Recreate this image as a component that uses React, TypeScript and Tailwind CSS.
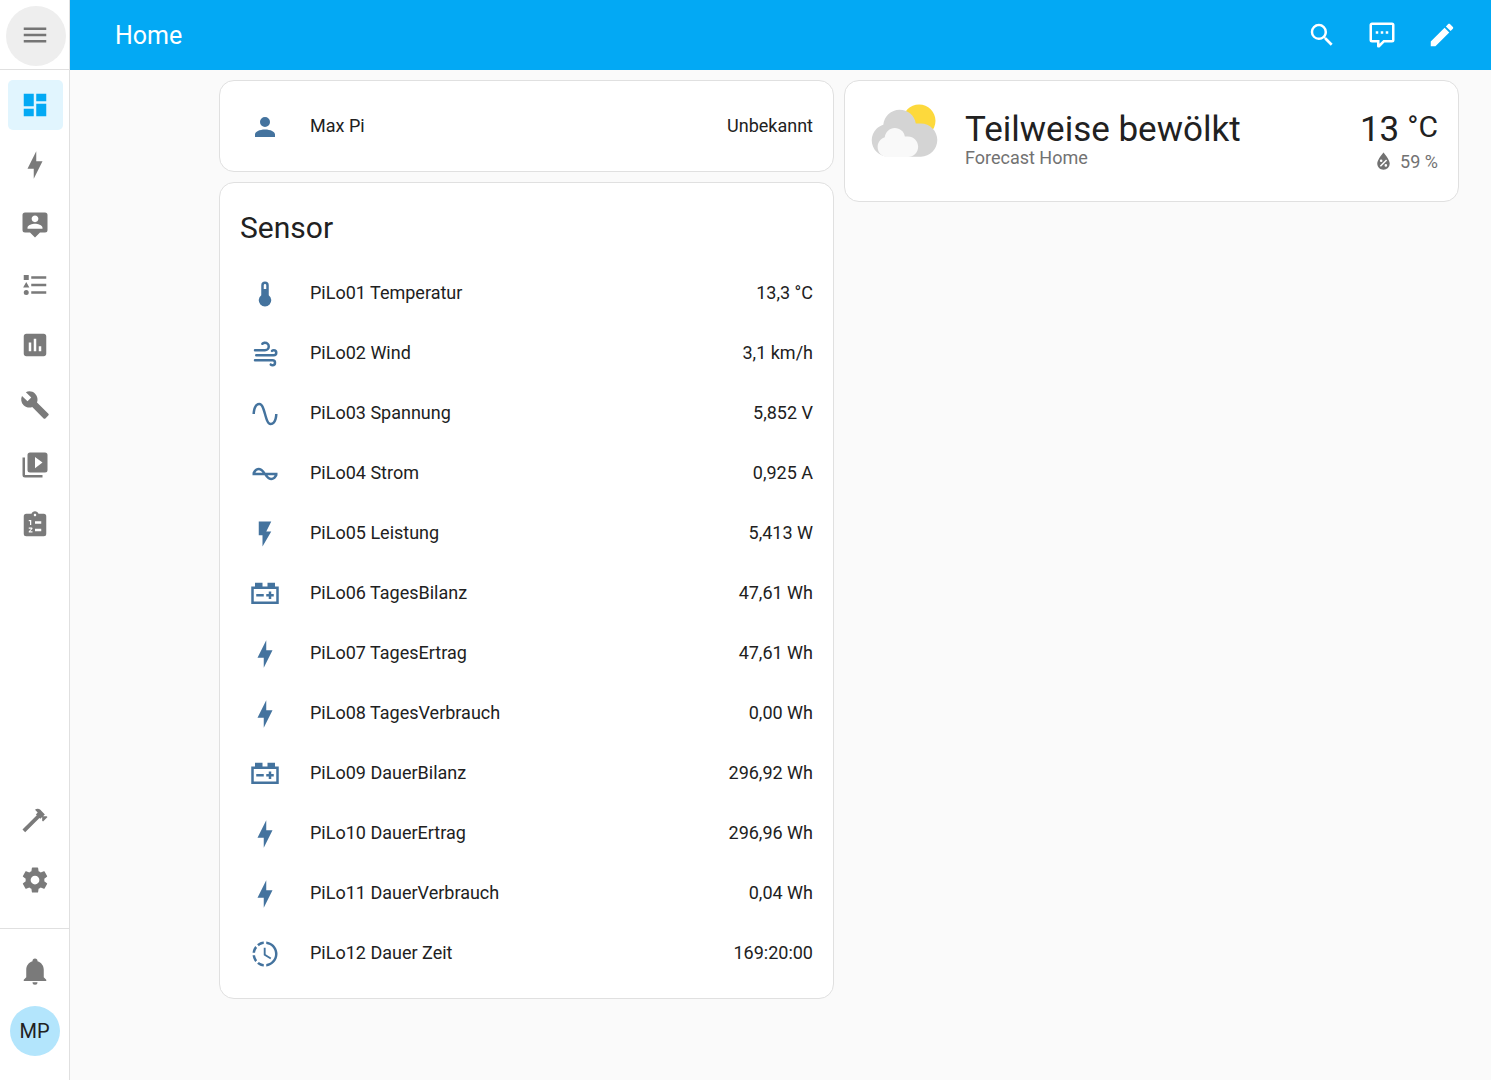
import { useState } from 'react';

// 24x24 icon paths
const ICONS = {
  menu: 'M3,6H21V8H3V6M3,11H21V13H3V11M3,16H21V18H3V16Z',
  dashboard: 'M13,3V9H21V3M13,21H21V11H13M3,21H11V15H3M3,13H11V3H3V13Z',
  bolt: 'M11 15H6L13 1V9H18L11 23V15Z',
  map: 'M20,2H4A2,2 0 0,0 2,4V16A2,2 0 0,0 4,18H8L12,22L16,18H20A2,2 0 0,0 22,16V4A2,2 0 0,0 20,2M12,4.3C13.5,4.3 14.7,5.5 14.7,7C14.7,8.5 13.5,9.7 12,9.7C10.5,9.7 9.3,8.5 9.3,7C9.3,5.5 10.5,4.3 12,4.3M18,15H6V14.1C6,12.1 10,11 12,11C14,11 18,12.1 18,14.1V15Z',
  logbook: 'M5,9.5L7.5,14H2.5L5,9.5M3,4H7V8H3V4M5,20A2,2 0 0,0 7,18A2,2 0 0,0 5,16A2,2 0 0,0 3,18A2,2 0 0,0 5,20M9,5V7H21V5H9M9,19H21V17H9V19M9,13H21V11H9V13Z',
  history: 'M9 17H7V10H9V17M13 17H11V7H13V17M17 17H15V13H17V17M19 3H5C3.9 3 3 3.9 3 5V19C3 20.1 3.9 21 5 21H19C20.1 21 21 20.1 21 19V5C21 3.9 20.1 3 19 3Z',
  wrench: 'M22.7,19L13.6,9.9C14.5,7.6 14,4.9 12.1,3C10.1,1 7.1,0.6 4.7,1.7L9,6L6,9L1.6,4.7C0.4,7.1 0.9,10.1 2.9,12.1C4.8,14 7.5,14.5 9.8,13.6L18.9,22.7C19.3,23.1 19.9,23.1 20.3,22.7L22.6,20.4C23.1,20 23.1,19.3 22.7,19Z',
  media: 'M4,6H2V20A2,2 0 0,0 4,22H18V20H4V6M20,2H8A2,2 0 0,0 6,4V16A2,2 0 0,0 8,18H20A2,2 0 0,0 22,16V4A2,2 0 0,0 20,2M12,14.5V5.5L18,10L12,14.5Z',
  todo: 'M19,3H14.82C14.4,1.84 13.3,1 12,1C10.7,1 9.6,1.84 9.18,3H5A2,2 0 0,0 3,5V19A2,2 0 0,0 5,21H19A2,2 0 0,0 21,19V5A2,2 0 0,0 19,3M7,8H9V12H8V9H7V8M10,17V18H7V17.08L9,15H7V14H9.25C9.66,14 10,14.34 10,14.75C10,14.95 9.92,15.14 9.79,15.27L8.12,17H10M11,4C11,3.45 11.45,3 12,3C12.55,3 13,3.45 13,4C13,4.55 12.55,5 12,5C11.45,5 11,4.55 11,4M17,17H12V15H17V17M17,11H12V9H17V11Z',
  hammer: 'M2,19.63L13.43,8.2L12.72,7.5L14.14,6.07L12,3.89C13.2,2.7 15.09,2.7 16.27,3.89L19.87,7.5L18.45,8.91H21.29L22,9.62L18.45,13.21L17.74,12.5V9.62L16.27,11.04L15.56,10.33L4.13,21.76L2,19.63Z',
  cog: 'M12,15.5A3.5,3.5 0 0,1 8.5,12A3.5,3.5 0 0,1 12,8.5A3.5,3.5 0 0,1 15.5,12A3.5,3.5 0 0,1 12,15.5M19.43,12.97C19.47,12.65 19.5,12.33 19.5,12C19.5,11.67 19.47,11.34 19.43,11L21.54,9.37C21.73,9.22 21.78,8.95 21.66,8.73L19.66,5.27C19.54,5.05 19.27,4.96 19.05,5.05L16.56,6.05C16.04,5.66 15.5,5.32 14.87,5.07L14.5,2.42C14.46,2.18 14.25,2 14,2H10C9.75,2 9.54,2.18 9.5,2.42L9.13,5.07C8.5,5.32 7.96,5.66 7.44,6.05L4.95,5.05C4.73,4.96 4.46,5.05 4.34,5.27L2.34,8.73C2.21,8.95 2.27,9.22 2.46,9.37L4.57,11C4.53,11.34 4.5,11.67 4.5,12C4.5,12.33 4.53,12.65 4.57,12.97L2.46,14.63C2.27,14.78 2.21,15.05 2.34,15.27L4.34,18.73C4.46,18.95 4.73,19.03 4.95,18.95L7.44,17.94C7.96,18.34 8.5,18.68 9.13,18.93L9.5,21.58C9.54,21.82 9.75,22 10,22H14C14.25,22 14.46,21.82 14.5,21.58L14.87,18.93C15.5,18.67 16.04,18.34 16.56,17.94L19.05,18.95C19.27,19.03 19.54,18.95 19.66,18.73L21.66,15.27C21.78,15.05 21.73,14.78 21.54,14.63L19.43,12.97Z',
  bell: 'M21,19V20H3V19L5,17V11C5,7.9 7.03,5.17 10,4.29C10,4.19 10,4.1 10,4A2,2 0 0,1 12,2A2,2 0 0,1 14,4C14,4.1 14,4.19 14,4.29C16.97,5.17 19,7.9 19,11V17L21,19M14,21A2,2 0 0,1 12,23A2,2 0 0,1 10,21',
  search: 'M9.5,3A6.5,6.5 0 0,1 16,9.5C16,11.11 15.41,12.59 14.44,13.73L14.71,14H15.5L20.5,19L19,20.5L14,15.5V14.71L13.73,14.44C12.59,15.41 11.11,16 9.5,16A6.5,6.5 0 0,1 3,9.5A6.5,6.5 0 0,1 9.5,3M9.5,5C7,5 5,7 5,9.5C5,12 7,14 9.5,14C12,14 14,12 14,9.5C14,7 12,5 9.5,5Z',
  message: 'M9,22A1,1 0 0,1 8,21V18H4A2,2 0 0,1 2,16V4C2,2.89 2.9,2 4,2H20A2,2 0 0,1 22,4V16A2,2 0 0,1 20,18H13.9L10.2,21.71C10,21.9 9.75,22 9.5,22V22H9M10,16V19.08L13.08,16H20V4H4V16H10M17,11H15V9H17V11M13,11H11V9H13V11M9,11H7V9H9V11Z',
  pencil: 'M20.71,7.04C21.1,6.65 21.1,6 20.71,5.63L18.37,3.29C18,2.9 17.35,2.9 16.96,3.29L15.12,5.12L18.87,8.87M3,17.25V21H6.75L17.81,9.93L14.06,6.18L3,17.25Z',
  account: 'M12,4A4,4 0 0,1 16,8A4,4 0 0,1 12,12A4,4 0 0,1 8,8A4,4 0 0,1 12,4M12,14C16.42,14 20,15.79 20,18V20H4V18C4,15.79 7.58,14 12,14Z',
  thermometer: 'M15 13V5A3 3 0 0 0 9 5V13A5 5 0 1 0 15 13M12 4A1 1 0 0 1 13 5V8H11V5A1 1 0 0 1 12 4Z',
  wind: 'M4,10A1,1 0 0,1 3,9A1,1 0 0,1 4,8H12A2,2 0 0,0 14,6A2,2 0 0,0 12,4C11.45,4 10.95,4.22 10.59,4.59C10.2,5 9.56,5 9.17,4.59C8.78,4.2 8.78,3.56 9.17,3.17C9.9,2.45 10.9,2 12,2A4,4 0 0,1 16,6A4,4 0 0,1 12,10H4M19,12A1,1 0 0,0 20,11A1,1 0 0,0 19,10C18.72,10 18.47,10.11 18.29,10.29C17.9,10.68 17.27,10.68 16.88,10.29C16.5,9.9 16.5,9.27 16.88,8.88C17.42,8.34 18.17,8 19,8A3,3 0 0,1 22,11A3,3 0 0,1 19,14H5A1,1 0 0,1 4,13A1,1 0 0,1 5,12H19M18,18H4A1,1 0 0,1 3,17A1,1 0 0,1 4,16H18A3,3 0 0,1 21,19A3,3 0 0,1 18,22C17.17,22 16.42,21.66 15.88,21.12C15.5,20.73 15.5,20.1 15.88,19.71C16.27,19.32 16.9,19.32 17.29,19.71C17.47,19.89 17.72,20 18,20A1,1 0 0,0 19,19A1,1 0 0,0 18,18Z',
  sine: 'M16.5,21C13.5,21 12.31,16.76 11.05,12.28C10.14,9.04 9,5 7.5,5C4.11,5 4,11.93 4,12H2C2,11.63 2.06,3 7.5,3C10.5,3 11.71,7.25 12.97,11.74C13.83,14.8 15,19 16.5,19C19.94,19 20.03,12.07 20.03,12H22.03C22.03,12.37 21.97,21 16.5,21Z',
  current: 'M12.43 11C12.28 10.84 10 7 7 7S2.32 10.18 2 11V13H11.57C11.72 13.16 14 17 17 17S21.68 13.82 22 13V11H12.43M7 9C8.17 9 9.18 9.85 10 11H4.31C4.78 10.17 5.54 9 7 9M17 15C15.83 15 14.82 14.15 14 13H19.69C19.22 13.83 18.46 15 17 15Z',
  flash: 'M7,2V13H10V22L17,10H13L17,2H7Z',
  battery: 'M4,3V6H1V20H23V6H20V3H14V6H10V3H4M3,8H21V18H3V8M15,10V12H13V14H15V16H17V14H19V12H17V10H15M5,12V14H11V12H5Z',
  clock: 'M13,2.03V2.05L13,4.05C17.39,4.59 20.5,8.58 19.96,12.97C19.5,16.61 16.64,19.5 13,19.93V21.93C18.5,21.38 22.5,16.5 21.95,11C21.5,6.25 17.73,2.5 13,2.03M11,2.06C9.05,2.25 7.19,3 5.67,4.26L7.1,5.74C8.22,4.84 9.57,4.26 11,4.06V2.06M4.26,5.67C3,7.19 2.25,9.04 2.05,11H4.05C4.24,9.58 4.8,8.23 5.69,7.1L4.26,5.67M2.06,13C2.26,14.96 3.03,16.81 4.27,18.33L5.69,16.9C4.81,15.77 4.24,14.42 4.06,13H2.06M7.1,18.37L5.67,19.74C7.18,21 9.04,21.79 11,22V20C9.58,19.82 8.23,19.25 7.1,18.37M12.5,7V12.25L17,14.92L16.25,16.15L11,13V7H12.5Z',
  humidity: 'M12,3.25C12,3.25 6,10 6,14C6,17.32 8.69,20 12,20A6,6 0 0,0 18,14C18,10 12,3.25 12,3.25M14.47,9.97L15.53,11.03L9.53,17.03L8.47,15.97M9.75,10A1.25,1.25 0 0,1 11,11.25A1.25,1.25 0 0,1 9.75,12.5A1.25,1.25 0 0,1 8.5,11.25A1.25,1.25 0 0,1 9.75,10M14.25,14.5A1.25,1.25 0 0,1 15.5,15.75A1.25,1.25 0 0,1 14.25,17A1.25,1.25 0 0,1 13,15.75A1.25,1.25 0 0,1 14.25,14.5Z',
};

type IconName = keyof typeof ICONS;

const NAV: { id: string; label: string; icon: IconName }[] = [
  { id: 'home', label: 'Übersicht', icon: 'dashboard' },
  { id: 'energy', label: 'Energie', icon: 'bolt' },
  { id: 'map', label: 'Karte', icon: 'map' },
  { id: 'logbook', label: 'Logbuch', icon: 'logbook' },
  { id: 'history', label: 'Verlauf', icon: 'history' },
  { id: 'tools', label: 'Werkzeuge', icon: 'wrench' },
  { id: 'media', label: 'Medien', icon: 'media' },
  { id: 'todo', label: 'To-do-Listen', icon: 'todo' },
];

const NAV_BOTTOM: { id: string; label: string; icon: IconName }[] = [
  { id: 'developer', label: 'Entwicklerwerkzeuge', icon: 'hammer' },
  { id: 'config', label: 'Einstellungen', icon: 'cog' },
];

const ACTIONS: { label: string; icon: IconName }[] = [
  { label: 'Suche', icon: 'search' },
  { label: 'Assist', icon: 'message' },
  { label: 'Bearbeiten', icon: 'pencil' },
];

const SENSORS: { name: string; value: string; icon: IconName }[] = [
  { name: 'PiLo01 Temperatur', value: '13,3 °C', icon: 'thermometer' },
  { name: 'PiLo02 Wind', value: '3,1 km/h', icon: 'wind' },
  { name: 'PiLo03 Spannung', value: '5,852 V', icon: 'sine' },
  { name: 'PiLo04 Strom', value: '0,925 A', icon: 'current' },
  { name: 'PiLo05 Leistung', value: '5,413 W', icon: 'flash' },
  { name: 'PiLo06 TagesBilanz', value: '47,61 Wh', icon: 'battery' },
  { name: 'PiLo07 TagesErtrag', value: '47,61 Wh', icon: 'bolt' },
  { name: 'PiLo08 TagesVerbrauch', value: '0,00 Wh', icon: 'bolt' },
  { name: 'PiLo09 DauerBilanz', value: '296,92 Wh', icon: 'battery' },
  { name: 'PiLo10 DauerErtrag', value: '296,96 Wh', icon: 'bolt' },
  { name: 'PiLo11 DauerVerbrauch', value: '0,04 Wh', icon: 'bolt' },
  { name: 'PiLo12 Dauer Zeit', value: '169:20:00', icon: 'clock' },
];

function Icon({ name, className = 'size-[30px]' }: { name: IconName; className?: string }) {
  return (
    <svg viewBox="0 0 24 24" fill="currentColor" fillRule="evenodd" aria-hidden="true" className={`shrink-0 ${className}`}>
      <path d={ICONS[name]} />
    </svg>
  );
}

function NavLink({ id, label, icon, active, onSelect }: {
  id: string;
  label: string;
  icon: IconName;
  active: boolean;
  onSelect: (id: string) => void;
}) {
  return (
    <a
      href={`#${id}`}
      aria-label={label}
      onClick={() => onSelect(id)}
      className={`flex h-[50px] items-center rounded-[5px] pl-3 ${active ? 'bg-[#e1f5fe] text-[#03a9f4]' : 'text-[#7a7a7a]'}`}
    >
      <Icon name={icon} />
    </a>
  );
}

function EntityRow({ name, value, icon }: { name: string; value: string; icon: IconName }) {
  return (
    <li className="flex h-[50px] items-center pb-0.5">
      <span className="flex w-[50px] justify-center pt-1 text-[#44739e]">
        <Icon name={icon} />
      </span>
      <span className="ml-5 flex-1 truncate">{name}</span>
      <span>{value}</span>
    </li>
  );
}

function PartlyCloudy() {
  return (
    <svg viewBox="0 0 17 17" aria-hidden="true" className="size-20 shrink-0">
      <path
        fill="#fdd93c"
        d="M14.981 4.2112c0 1.9244-1.56 3.4844-3.484 3.4844-1.9244 0-3.4844-1.56-3.4844-3.4844s1.56-3.484 3.4844-3.484c1.9242 0 3.484 1.5597 3.484 3.484"
      />
      <path
        fill="#d4d4d4"
        d="m3.8863 5.035c-0.54892 0.16898-1.04 0.46637-1.4372 0.8636-0.63077 0.63041-1.0206 1.4933-1.0206 2.455 0 1.9251 1.5589 3.4682 3.4837 3.4682h6.9688c1.9251 0 3.484-1.5981 3.484-3.5232 0-1.9251-1.5589-3.5232-3.484-3.5232h-1.0834c-0.25294-1.6916-1.6986-2.9083-3.4463-2.9083-1.7995 0-3.2805 1.4153-3.465 3.1679"
      />
      <path
        fill="#f9f9f9"
        d="m4.1996 7.6995c-0.33902 0.10407-0.64276 0.28787-0.88794 0.5334-0.39017 0.38982-0.63147 0.92322-0.63147 1.5176 0 1.1896 0.96414 2.1431 2.1537 2.1431h4.3071c1.1896 0 2.153-0.98742 2.153-2.1777 0-1.1896-0.96344-2.1777-2.153-2.1777h-0.66992c-0.15593-1.0449-1.0499-1.7974-2.1297-1.7974-1.112 0-2.0274 0.87524-2.1417 1.9586"
      />
    </svg>
  );
}

export default function App() {
  const [page, setPage] = useState('home');

  return (
    <div className="flex min-h-screen bg-[#fafafa] font-[Roboto,sans-serif] text-[18px] text-[#212121]">
      <aside className="flex w-[70px] shrink-0 flex-col border-r border-[#e0e0e0] bg-white">
        <div className="h-[70px] border-b border-[#e0e0e0] pt-1.5 pl-1.5">
          <button
            type="button"
            aria-label="Seitenleiste"
            className="flex size-[60px] items-center justify-center rounded-full bg-[#eeeeee] pr-0.5 pb-0.5 text-[#757575]"
          >
            <Icon name="menu" />
          </button>
        </div>

        <nav className="flex flex-1 flex-col gap-2.5 pt-2.5 pr-1.5 pb-[23px] pl-2">
          {NAV.map((item) => (
            <NavLink key={item.id} {...item} active={page === item.id} onSelect={setPage} />
          ))}
          <div className="flex-1" />
          {NAV_BOTTOM.map((item) => (
            <NavLink key={item.id} {...item} active={page === item.id} onSelect={setPage} />
          ))}
        </nav>

        <div className="flex flex-col items-center gap-2.5 border-t border-[#e0e0e0] pt-[17px] pb-6">
          <button type="button" aria-label="Benachrichtigungen" className="flex size-[50px] items-center justify-center text-[#7a7a7a]">
            <Icon name="bell" />
          </button>
          <a href="#profile" className="flex size-[50px] items-center justify-center rounded-full bg-[#b3e5fc] text-xl">
            MP
          </a>
        </div>
      </aside>

      <div className="flex min-w-0 flex-1 flex-col">
        <header className="flex h-[70px] items-center bg-[#03a9f4] pr-[19px] pl-[45px] text-white">
          <h1 className="flex-1 pt-0.5 text-[25px]">Home</h1>
          {ACTIONS.map((action) => (
            <button key={action.label} type="button" aria-label={action.label} className="flex size-[60px] items-center justify-center">
              <Icon name={action.icon} />
            </button>
          ))}
        </header>

        <main className="grid grid-cols-2 items-start gap-2.5 py-2.5 pr-8 pl-[149px]">
          <div className="flex min-w-0 flex-col gap-2.5">
            <section className="rounded-[15px] border border-[#e0e0e0] bg-white p-5">
              <ul>
                <EntityRow name="Max Pi" value="Unbekannt" icon="account" />
              </ul>
            </section>

            <section className="rounded-[15px] border border-[#e0e0e0] bg-white px-5 pt-[15px] pb-5">
              <h2 className="mb-2.5 text-[30px] leading-[60px]">Sensor</h2>
              <ul className="flex flex-col gap-2.5">
                {SENSORS.map((sensor) => (
                  <EntityRow key={sensor.name} {...sensor} />
                ))}
              </ul>
            </section>
          </div>

          <section className="flex min-w-0 items-start rounded-[15px] border border-[#e0e0e0] bg-white p-5">
            <PartlyCloudy />
            <div className="ml-5 min-w-0 flex-1 pt-[9px]">
              <h2 className="text-[35px] leading-10">Teilweise bewölkt</h2>
              <p className="leading-4 text-[#727272]">Forecast Home</p>
            </div>
            <div className="flex flex-col items-end pt-[9px]">
              <p className="flex text-[35px] leading-10">
                13
                <span className="ml-2 text-[30px] leading-[34px]">°C</span>
              </p>
              <p className="flex h-[22px] items-center gap-1 text-[#727272]">
                <Icon name="humidity" className="size-[25px]" />
                59 %
              </p>
            </div>
          </section>
        </main>
      </div>
    </div>
  );
}
